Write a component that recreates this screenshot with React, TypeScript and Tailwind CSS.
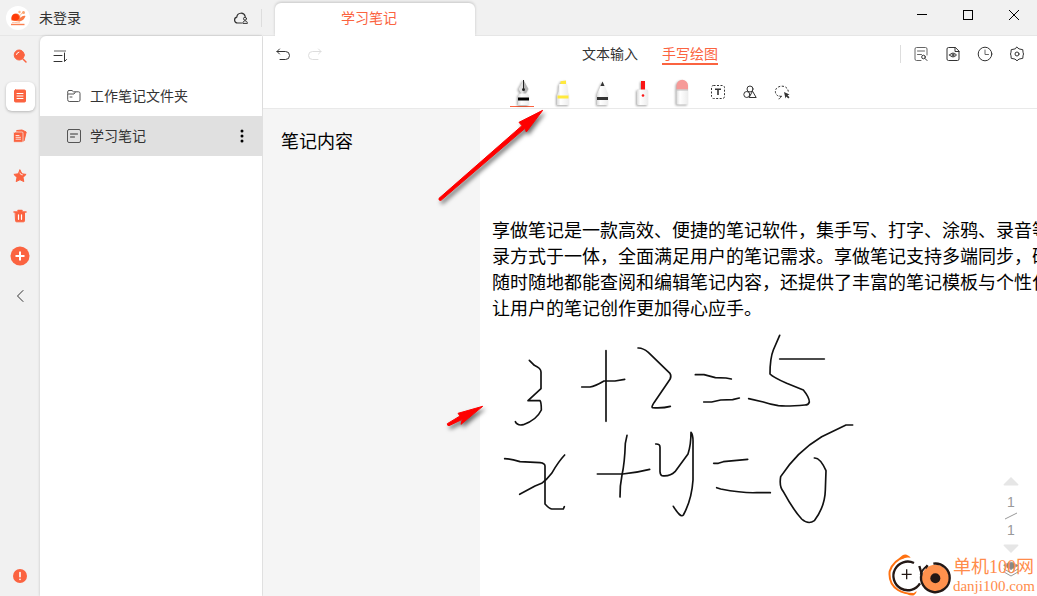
import type { ReactNode } from "react";
import { clsx } from "clsx";

const ACCENT = "#fb6340";

const INK = [
  "M148 121 L163 136 Q183 145 183 156 V206 L144 242 H180 Q184 246 184 270 Q170 300 130 314 Q112 318 106 305",
  "M305 201 H330 Q345 199 372 183 H405 L434 178",
  "M378 92 V304",
  "M474 84 Q488 83 505 97 L570 160 Q575 168 570 178 L522 248 Q513 262 518 263 Q550 265 571 259",
  "M646 164 H672 L706 173 L738 174 L754 177",
  "M671 246 H695 L722 240 L758 239 L778 234",
  "M899 46 L880 90 Q870 115 870 162 Q880 172 920 190 L970 210 Q988 232 988 246 Q986 255 975 255 Q920 260 895 257 Q870 253 850 246 L806 236",
  "M899 117 H1033",
  "M74 416 Q90 416 120 425 L180 428 Q195 430 195 438 V552 Q208 566 215 567 H250 L253 560",
  "M254 405 Q235 425 215 460 Q200 480 185 490 L165 498 L119 523",
  "M352 462 H428 Q470 458 509 448",
  "M441 346 L436 370 Q434 430 426 465 Q419 500 420 531",
  "M527 372 Q540 371 540 382 V455 Q541 466 546 467 Q570 470 585 455 L624 402 Q633 375 633 337 Q640 345 639 370 V480 Q635 540 610 585 Q602 595 580 559",
  "M701 430 H715 L730 425 L803 418",
  "M710 503 L722 507 Q790 520 830 518 H871",
  "M1118 315 H1098 L1025 350 Q950 395 902 470 Q897 500 910 515 Q940 570 965 597 Q985 615 1003 602 Q1035 560 1036 510 L1038 452 Q1020 412 1003 414",
];

const LINES = [
  "享做笔记是一款高效、便捷的笔记软件，集手写、打字、涂鸦、录音等",
  "录方式于一体，全面满足用户的笔记需求。享做笔记支持多端同步，确",
  "随时随地都能查阅和编辑笔记内容，还提供了丰富的笔记模板与个性化",
  "让用户的笔记创作更加得心应手。",
];

function Icon({ children, className }: { children: ReactNode; className?: string }) {
  return (
    <svg
      viewBox="0 0 16 16"
      fill="none"
      stroke="currentColor"
      strokeLinecap="round"
      strokeLinejoin="round"
      className={clsx("size-4 shrink-0", className)}
      aria-hidden="true"
    >
      {children}
    </svg>
  );
}

const railItems = [
  {
    label: "搜索",
    icon: (
      <>
        <circle cx="7.2" cy="7" r="5" fill={ACCENT} />
        <path d="M4.5 6.5a3 3 0 0 1 2.4-2.4" stroke="#fff" />
        <path d="M11 11l3 3" strokeWidth="1.5" />
      </>
    ),
  },
  {
    label: "笔记",
    active: true,
    icon: (
      <>
        <rect x="2.5" y="2" width="11" height="12" rx="1" fill={ACCENT} />
        <path d="M5 5.5h6M5 8h6M5 10.5h6" stroke="#fff" />
      </>
    ),
  },
  {
    label: "模板",
    icon: (
      <>
        <path d="M5 2.5l5-.5 4.2 2-2.2 9h-5z" fill={ACCENT} />
        <rect x="1.5" y="4" width="9.5" height="10.3" rx="1" fill={ACCENT} stroke="#f1f1f1" strokeWidth=".7" />
        <path d="M4 7.5h3M4 9.3h4.5M4 11.2h4.5" stroke="#fff" strokeWidth=".8" />
      </>
    ),
  },
  {
    label: "收藏",
    icon: (
      <>
        <path
          d="M8 2l1.9 3.8 4.2.6-3.1 3 .8 4.2L8 11.7l-3.8 1.9.8-4.2-3.1-3 4.2-.6z"
          fill={ACCENT}
        />
        <path d="M8 5l.8 1.5 1.6.3" stroke="#fff" strokeWidth=".8" />
      </>
    ),
  },
  {
    label: "回收站",
    icon: (
      <>
        <path d="M2 4h12M6 2.5h4" strokeWidth="1.5" />
        <path d="M3.5 4.5h9v8.3a1 1 0 0 1-1 1h-7a1 1 0 0 1-1-1z" fill={ACCENT} />
        <path d="M6.5 6.8v4.5M9.5 6.8v4.5" stroke="#fff" strokeWidth="1.2" />
      </>
    ),
  },
];

function Rail() {
  return (
    <nav className="flex w-10 shrink-0 flex-col items-center text-[#fb6340]">
      {railItems.map((item) => (
        <div key={item.label} className="flex h-10 items-center">
          <button
            aria-label={item.label}
            className={clsx(
              "flex size-[29px] items-center justify-center rounded-md",
              item.active && "bg-white shadow-[0_1px_3px_rgba(0,0,0,0.25)]"
            )}
          >
            <Icon>{item.icon}</Icon>
          </button>
        </div>
      ))}
      <button aria-label="新建" className="flex h-10 items-center">
        <svg viewBox="0 0 20 20" className="size-5">
          <circle cx="10" cy="10" r="9.5" fill={ACCENT} />
          <path d="M5.5 10h9M10 5.5v9" stroke="#fff" strokeWidth="2" />
        </svg>
      </button>
      <button aria-label="收起" className="flex h-10 items-center text-[#333]">
        <Icon>
          <path d="M11 2.5L5.5 8l5.5 5.5" />
        </Icon>
      </button>
      <button aria-label="提示" className="mt-auto flex h-10 items-center">
        <Icon>
          <circle cx="8" cy="8" r="7" fill={ACCENT} stroke="none" />
          <path d="M8 4.5v4.3M8 11.3v.1" stroke="#fff" strokeWidth="1.6" />
        </Icon>
      </button>
    </nav>
  );
}

function NoteList() {
  return (
    <aside className="flex-1 rounded-tl-md bg-white shadow-[0_0_3px_rgba(0,0,0,0.2)]">
      <div className="flex h-10 items-center pl-3">
        <button aria-label="排序">
          <Icon>
            <path d="M2 3h12" stroke="#999" strokeWidth="1.5" strokeLinecap="butt" />
            <path d="M2 7.5h8M2 13.5h8M12.5 5v8.5l2-2" />
          </Icon>
        </button>
      </div>
      <ul>
        <li className="flex h-10 items-center">
          <button className="flex flex-1 items-center gap-2 pl-[26px]">
            <Icon>
              <path
                d="M1.7 5V3.8a1.3 1.3 0 0 1 1.3-1.3h3l1.5 1.3h5a1.5 1.5 0 0 1 1.5 1.5v6.7a1.5 1.5 0 0 1-1.5 1.5H3.2A1.5 1.5 0 0 1 1.7 12zM2 6h6l1.3-1.8M4 9h2"
                stroke="#555"
              />
            </Icon>
            <span>工作笔记文件夹</span>
          </button>
        </li>
        <li className="flex h-10 items-center bg-[#e0e0e0] pr-3">
          <button className="flex flex-1 items-center gap-2 pl-[26px]">
            <Icon>
              <rect x="1.5" y="1.5" width="13" height="13" rx="1.5" stroke="#555" />
              <path d="M4.5 6h7M4.5 9h4" />
            </Icon>
            <span>学习笔记</span>
          </button>
          <button aria-label="更多">
            <Icon className="text-black">
              <circle cx="8" cy="3" r="1.5" fill="currentColor" stroke="none" />
              <circle cx="8" cy="8" r="1.5" fill="currentColor" stroke="none" />
              <circle cx="8" cy="13" r="1.5" fill="currentColor" stroke="none" />
            </Icon>
          </button>
        </li>
      </ul>
    </aside>
  );
}

function Brand() {
  return (
    <header className="flex h-9 shrink-0 items-center border-b border-[#e6e6e6] pl-1.5">
      <svg viewBox="0 0 24 24" className="size-6">
        <circle cx="12" cy="12" r="12" fill="#fff" />
        <path d="M5.5 14.5c-1-4.500 1.500-7 4.500-7 2.500 0 4.500 2 4.500 4.500 1.500-2 3-2.500 5-2-1 3-3 5-6 5.500z" fill="#fb7a45" />
        <path d="M5.8 13.5c-.5-3.500 1.200-5.500 3.700-5.500s4 2 3.500 4.500c-1 2.500-5.500 2.500-7.200 1z" fill="#ff3c08" />
        <path d="M14.500 9.500c.5-2 1.500-3 3.500-3.500" stroke="#ffb98f" fill="none" />
        <circle cx="13.5" cy="6" r="1.200" fill="#ffb37d" />
        <circle cx="17.500" cy="6.500" r="1.500" fill="#fba36e" />
        <path d="M5 18.500h13.500" stroke="#fb8050" strokeWidth="1.4" fill="none" />
        <path d="M6 16.700c3-.8 5 .3 8 0" stroke="#ffc4a6" fill="none" />
      </svg>
      <span className="ml-[9px] flex-1">未登录</span>
      <button aria-label="云同步" className="mr-3">
        <Icon>
          <path d="M8.5 13h-4a3 3 0 0 1-.7-5.9 4.3 4.3 0 0 1 8.4-.8" strokeWidth="1.2" />
          <circle cx="12" cy="8.7" r="1.5" />
          <path d="M9.8 13c0-3 4.6-3 4.6 0z" />
        </Icon>
      </button>
      <span className="h-[18px] w-px bg-[#ddd]" />
    </header>
  );
}

function TitleBar() {
  return (
    <header className="flex h-9 shrink-0 items-end justify-between border-b border-[#e6e6e6] pl-3">
      <button className="-mb-px h-[33px] w-[200px] rounded-t-md bg-white pr-3 pb-1 text-[#fb6340] shadow-[0_-1px_3px_rgba(0,0,0,0.18)] [clip-path:inset(-4px_-4px_0_-4px)]">
        学习笔记
      </button>
      <div className="flex self-start text-black">
        <button aria-label="最小化" className="flex h-[30px] w-[46px] items-center justify-center">
          <svg width="10" height="10" stroke="currentColor" shapeRendering="crispEdges">
            <path d="M0 4.5h10" />
          </svg>
        </button>
        <button aria-label="最大化" className="flex h-[30px] w-[46px] items-center justify-center">
          <svg width="10" height="10" stroke="currentColor" fill="none">
            <rect x=".5" y=".5" width="9" height="9" />
          </svg>
        </button>
        <button aria-label="关闭" className="flex h-[30px] w-[46px] items-center justify-center">
          <svg width="10" height="10" stroke="currentColor">
            <path d="M0 0l10 10M10 0L0 10" />
          </svg>
        </button>
      </div>
    </header>
  );
}

const pens = [
  {
    label: "钢笔",
    active: true,
    art: (
      <>
        <path d="M13.5 1l5 9-3 5h-4l-3-5z" fill="#b5b5b5" />
        <path d="M13.5 1l-5 9 3 5h2z" fill="#e2e2e2" />
        <path d="M13.5 1v9" stroke="#222" />
        <circle cx="13.5" cy="10.5" r="1.5" fill="#222" />
        <path d="M10 14.5h7l2 2V26H8v-9.5z" fill="url(#barrel)" />
        <path d="M8 18.5h11v3H8z" fill="#000" />
      </>
    ),
  },
  {
    label: "荧光笔",
    art: (
      <>
        <path d="M10.5 2.2l5.5-.7V5h-5.5z" fill="#ffe93d" />
        <path d="M9 5h8l.6 8 1.4 3v10H7V16l1.4-3z" fill="url(#barrel)" />
        <path d="M7.500 16.500h11v3h-11z" fill="#ffe93d" />
      </>
    ),
  },
  {
    label: "铅笔",
    art: (
      <>
        <path d="M12.5 2.5l2 4.5h-4z" fill="#333" />
        <path d="M10.5 7h4l3.5 8v11H7V15z" fill="url(#barrel)" />
        <path d="M7 18h11v3H7z" fill="#333" />
      </>
    ),
  },
  {
    label: "激光笔",
    art: (
      <>
        <rect x="11" y="2" width="4" height="9" fill="#fa1616" />
        <rect x="7" y="10.5" width="11" height="15.5" rx="1" fill="url(#barrel)" />
        <circle cx="13" cy="16.5" r="1.3" fill="#fa1616" />
      </>
    ),
  },
  {
    label: "橡皮擦",
    art: (
      <>
        <rect x="6.5" y="10" width="11.5" height="15.5" rx="1" fill="url(#barrel)" />
        <path d="M6.5 10.5v-4a5.7 5.7 0 0 1 11.5 0v4z" fill="#f69a98" />
        <path d="M6.5 11H18" stroke="#bbb" />
      </>
    ),
  },
];

function Toolbar() {
  return (
    <div className="relative shrink-0 border-b border-[#e9e9e9] bg-white shadow-[0_1px_2px_rgba(0,0,0,0.05)]">
      <svg className="absolute size-0" aria-hidden="true">
        <linearGradient id="barrel">
          <stop offset="0" stopColor="#dcdcdc" />
          <stop offset="0.3" stopColor="#ffffff" />
          <stop offset="1" stopColor="#ececec" />
        </linearGradient>
      </svg>
      <div className="grid h-9 grid-cols-[1fr_auto_1fr] items-center">
        <div className="flex gap-4 pl-3">
          <button aria-label="撤销">
            <Icon>
              <path d="M4.5 3L2 5.5 4.5 8M2 5.5h8.500a3.800 3.800 0 0 1 0 8H5" />
            </Icon>
          </button>
          <button aria-label="重做" disabled>
            <Icon className="text-[#ddd]">
              <path d="M11.5 3L14 5.5 11.5 8M14 5.5H5.500a3.800 3.800 0 0 0 0 8H11" />
            </Icon>
          </button>
        </div>
        <div className="flex gap-6">
          <button className="border-b-2 border-transparent pt-px leading-[18px]">文本输入</button>
          <button className="border-b-2 border-[#fb6340] pt-px leading-[18px] text-[#fb6340]">手写绘图</button>
        </div>
        <div className="flex items-center justify-end gap-4 pr-3">
          <span className="-mr-1 h-[18px] w-px bg-[#ddd]" />
          <button aria-label="查找">
            <Icon>
              <path
                d="M8 14.500H3.500A1.500 1.500 0 0 1 2 13V3a1.500 1.500 0 0 1 1.500-1.500h9A1.500 1.500 0 0 1 14 3v6M4.500 5h7M4.500 8.500h4"
                stroke="#666"
              />
              <circle cx="10.5" cy="11" r="1.8" />
              <path d="M12 12.5l2 2" />
            </Icon>
          </button>
          <button aria-label="预览">
            <Icon>
              <path d="M10 1.5H3.500A1.500 1.500 0 0 0 2 3v10a1.500 1.500 0 0 0 1.500 1.500h9A1.500 1.500 0 0 0 14 13V5.500zM10 1.500v4h4" />
              <path d="M4.500 9q3.500-4 7 0-3.500 4-7 0z" />
              <circle cx="8" cy="9" r="1" />
            </Icon>
          </button>
          <button aria-label="历史">
            <Icon>
              <circle cx="8" cy="8" r="6.8" />
              <path d="M8 4v4.5h3.5" stroke="#666" />
            </Icon>
          </button>
          <button aria-label="设置">
            <Icon>
              <path d="M8 1.200l2 1.700 3.800.8.200 2.500.5 1.800-.5 1.800-.2 2.500-3.800.8-2 1.700-2-1.700-3.800-.8-.2-2.500L1.500 8 2 6.200l.2-2.500L6 2.900z" />
              <circle cx="8" cy="8" r="2" />
            </Icon>
          </button>
        </div>
      </div>
      <div className="flex h-9 justify-center gap-4">
        {pens.map((pen) => (
          <button
            key={pen.label}
            aria-label={pen.label}
            className={clsx(
              "flex h-[35px] w-6 items-end border-b",
              pen.active ? "border-[#fb6340]" : "border-transparent"
            )}
          >
            <svg viewBox="0 0 24 27" className="h-[27px] w-6 drop-shadow-[-1px_1px_1px_rgba(0,0,0,0.35)]">
              {pen.art}
            </svg>
          </button>
        ))}
        <button aria-label="文本框" className="pt-1">
          <Icon>
            <rect x="1.5" y="1.5" width="13" height="13" rx="2" strokeDasharray="2 1.500" strokeLinecap="butt" />
            <path d="M5 5.300h6M8 5.300v5.700" strokeWidth="1.6" strokeLinecap="butt" />
          </Icon>
        </button>
        <button aria-label="图形" className="pt-1">
          <Icon>
            <circle cx="8" cy="5" r="3" />
            <circle cx="4.8" cy="10.5" r="3" />
            <path d="M10.700 7.500l3.500 6H7.500z" />
          </Icon>
        </button>
        <button aria-label="套索" className="pt-1">
          <Icon>
            <path
              d="M8 12.300C3 13 .8 9.500 1.500 6.500 2.500 1 13.500 0 14.300 7.500"
              strokeDasharray="2.200 1.500"
              strokeLinecap="butt"
            />
            <path d="M6 12c1.500 1.500 0 2.500-1 2.800" />
            <path d="M10 8l5.500 2.500-2 .8 2 2-1.200 1.200-2-2-.8 2z" fill="currentColor" stroke="none" />
          </Icon>
        </button>
      </div>
    </div>
  );
}

function PageNav() {
  return (
    <div className="absolute right-[18px] bottom-[19px] flex w-4 flex-col items-center text-[#999]">
      <button aria-label="上一页">
        <svg width="16" height="9" fill="#e6e6e6" className="block">
          <path d="M8 0l7.500 7.500q0 1-1 1h-13q-1 0-1-1z" />
        </svg>
      </button>
      <span className="mt-1.5 leading-5">1</span>
      <svg width="14" height="8" stroke="#999">
        <path d="M1 7L13 1" />
      </svg>
      <span className="leading-5">1</span>
      <button aria-label="下一页" className="mt-1">
        <svg width="16" height="9" fill="#e6e6e6" className="block">
          <path d="M8 9L.5 1.500q0-1 1-1h13q1 0 1 1z" />
        </svg>
      </button>
      <button aria-label="图层" className="mt-2">
        <Icon>
          <path d="M8 1l7 3.500-7 4-7-4z" fill="#888" />
          <path d="M1 8l7 4 7-4M1 11l7 4 7-4" />
        </Icon>
      </button>
    </div>
  );
}

function Watermark() {
  return (
    <div className="absolute right-0.5 bottom-0 flex items-end gap-0.5 text-[#ff8c4b]">
      <svg viewBox="0 0 189 126" className="h-[42px] w-[63px]" fill="none">
        <path d="M52 8Q16 18 5 52 1 90 30 108 48 119 76 120" stroke="#ff7110" strokeWidth="6" />
        <path d="M32 14Q46-2 56 2q10 4 12 9-18-2-28 4zM60 117q14 6 26-6 0 8-8 13-12 2-20-4z" fill="#ff7110" />
        <path d="M78 27A43 43 0 1 0 96 88" stroke="#231815" strokeWidth="7" />
        <path d="M56 46v30M41 61h30" stroke="#231815" strokeWidth="4" />
        <path d="M98 62A43 43 0 0 1 118 36" stroke="#231815" strokeWidth="6" />
        <circle cx="142" cy="73" r="41" fill="#ff914d" />
        <path d="M136 29A43 43 0 1 1 101 59L94 36M112 43l7-9" stroke="#231815" strokeWidth="7" />
        <circle cx="142" cy="73" r="15" fill="#231815" />
      </svg>
      <div className="pb-px font-['Liberation_Serif','Noto_Sans_CJK_SC',serif]">
        <p className="text-lg leading-5">单机100网</p>
        <p className="text-[15px] leading-[18px]">danji100.com</p>
      </div>
    </div>
  );
}

function Arrows() {
  return (
    <svg
      viewBox="0 0 450 1050"
      className="pointer-events-none absolute top-[-9px] left-[167px] h-[350px] w-[150px] drop-shadow-[2px_3px_2px_rgba(0,0,0,0.55)]"
      fill="#fe0000"
      stroke="#fe0000"
      strokeWidth="3"
      strokeLinejoin="round"
    >
      <path d="M338 31l-71 36 9 10L27 295q-2 7 6 6L285 85l4 11z" />
      <path d="M158 919l-74 21 6 8-38 23q-1 6 5 6l40-19-4 15z" />
    </svg>
  );
}

function Workspace() {
  return (
    <section className="relative flex flex-1 overflow-hidden bg-white">
      <div className="w-[217px] shrink-0 bg-[#f5f5f5] pt-5 pl-[18px]">
        <h2 className="text-lg leading-[26px] text-black">笔记内容</h2>
      </div>
      <article className="relative min-w-0 flex-1 pt-[109px] pl-3 text-lg leading-[26px] text-black">
        {LINES.map((line) => (
          <p key={line} className="whitespace-nowrap">
            {line}
          </p>
        ))}
        <svg
          viewBox="0 0 1200 630"
          className="absolute top-[211px] left-0 h-[210px] w-[400px]"
          fill="none"
          stroke="#111"
          strokeWidth="5"
          strokeLinecap="round"
          strokeLinejoin="round"
        >
          {INK.map((d) => (
            <path key={d} d={d} />
          ))}
        </svg>
      </article>
      <PageNav />
      <Watermark />
      <Arrows />
    </section>
  );
}

export default function App() {
  return (
    <div className="flex h-screen overflow-hidden bg-[#f1f1f1] font-['Liberation_Sans','Noto_Sans_CJK_SC',sans-serif] text-sm text-[#333]">
      <div className="flex w-[262px] shrink-0 flex-col">
        <Brand />
        <div className="flex flex-1">
          <Rail />
          <NoteList />
        </div>
      </div>
      <main className="flex min-w-0 flex-1 flex-col pl-px">
        <TitleBar />
        <Toolbar />
        <Workspace />
      </main>
    </div>
  );
}
